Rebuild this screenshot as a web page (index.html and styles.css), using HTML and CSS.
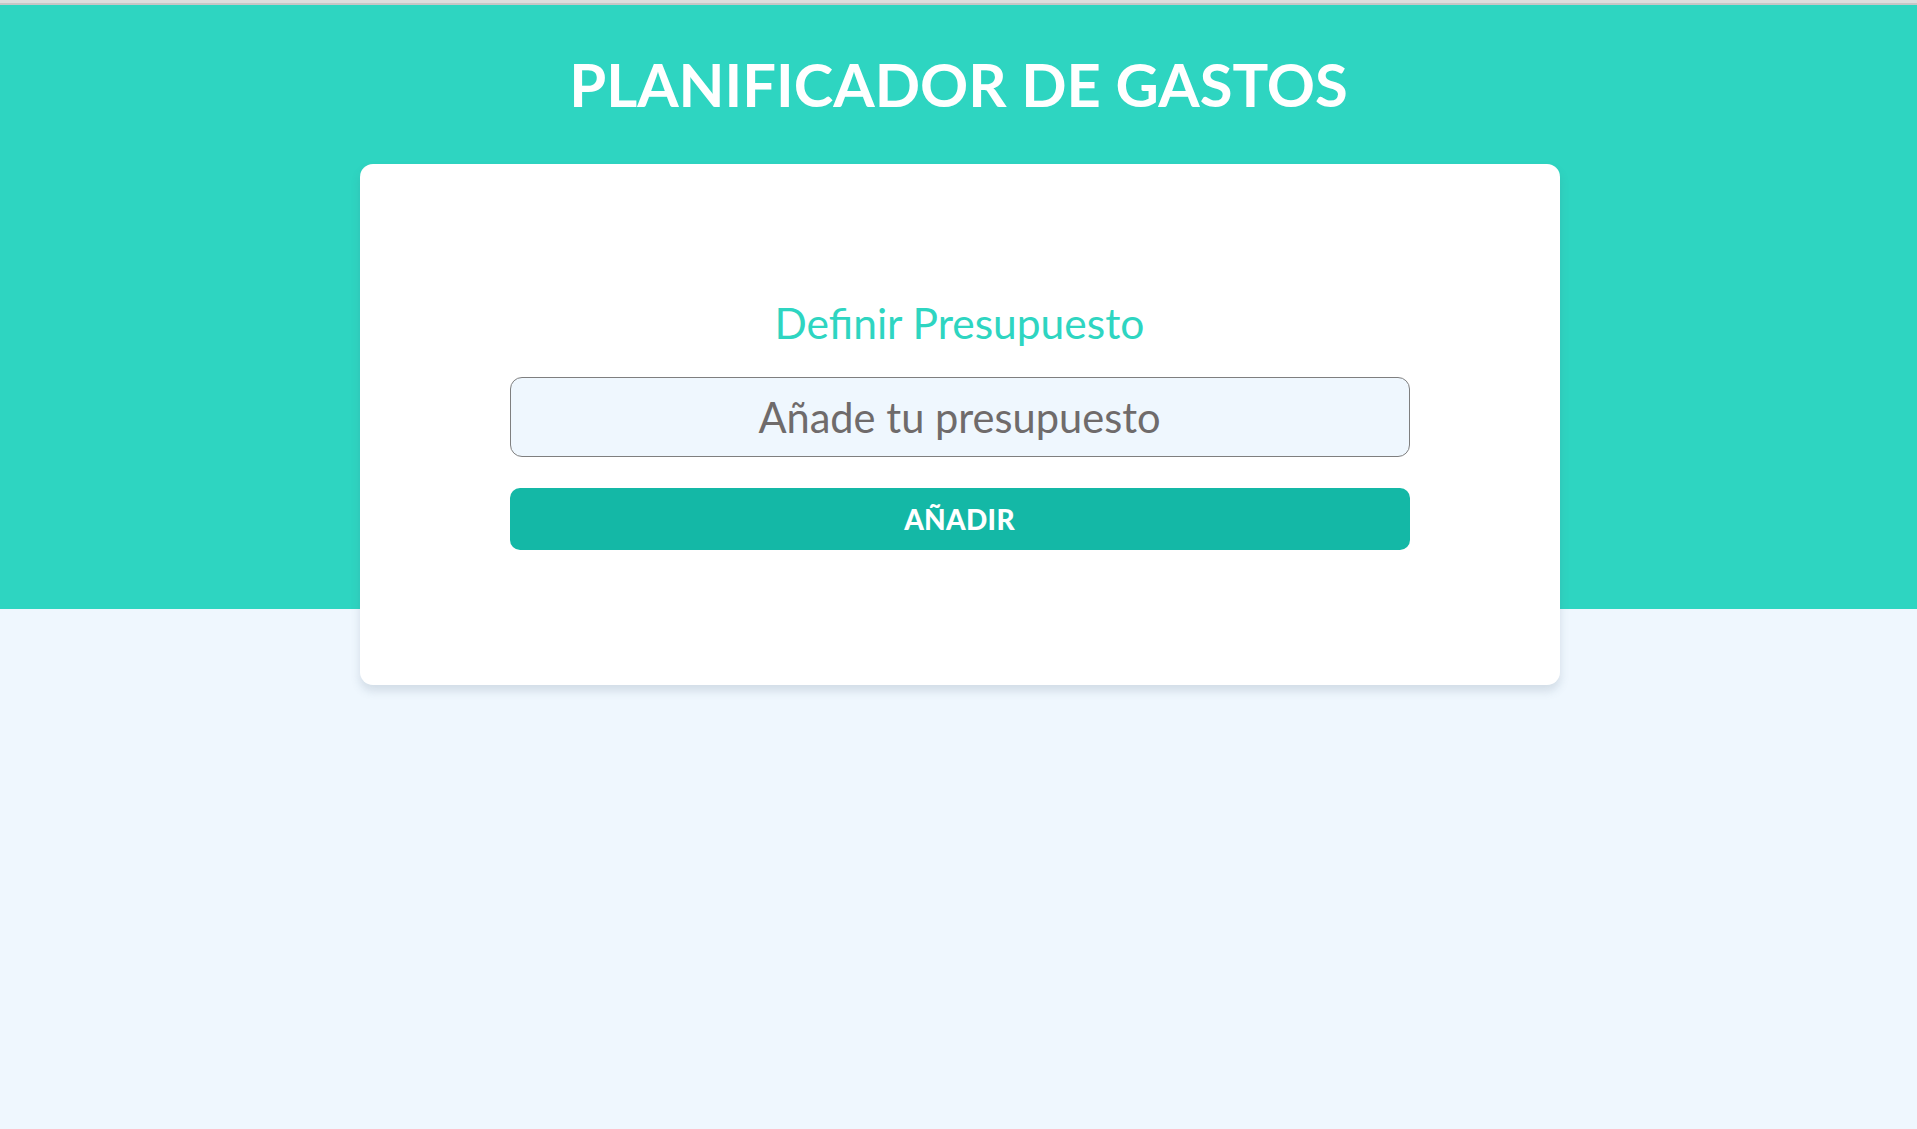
FILE: index.html
```html
<!DOCTYPE html>
<html lang="es">
<head>
<meta charset="utf-8">
<title>Planificador de Gastos</title>
<link rel="stylesheet" href="styles.css">
</head>
<body>
<div class="topline"></div>
<header class="header">
  <h1 class="title">PLANIFICADOR DE GASTOS</h1>
</header>
<main class="main">
  <section class="card">
    <form class="form">
      <label class="label" for="budget">Definir Presupuesto</label>
      <input class="input" id="budget" type="text" placeholder="Añade tu presupuesto">
      <button class="button" type="button">AÑADIR</button>
    </form>
  </section>
</main>
</body>
</html>
```
FILE: styles.css
```css
* { box-sizing: border-box; }
html, body { margin: 0; padding: 0; }
body {
  background: #eff7fe;
  font-family: Lato, "Open Sans", sans-serif;
  min-height: 1129px;
}
.topline {
  height: 5px;
  background: linear-gradient(#dddddd 0 3px, #c6c6c6 3px 5px);
}
.header {
  background: #2ed5c1;
  padding: 43px 0 489px;
}
.title {
  margin: 0;
  color: #ffffff;
  text-align: center;
  font-size: 59.7px;
  line-height: 72px;
  font-weight: 700;
}
.main {
  display: flex;
  justify-content: center;
  margin-top: -445px;
  padding-left: 2px;
}
.card {
  width: 1200px;
  background: #ffffff;
  border-radius: 13px;
  box-shadow: 0 6px 10px rgba(80, 100, 120, 0.18);
  padding: 134px 150px 135px;
}
.form {
  display: flex;
  flex-direction: column;
  align-items: center;
}
.label {
  color: #2ed5c1;
  font-size: 42.5px;
  line-height: 50px;
  font-weight: 400;
  margin-bottom: 29px;
}
.input {
  width: 100%;
  height: 80px;
  background: #eff7fe;
  border: 1px solid #7f7f7f;
  border-radius: 12px;
  text-align: center;
  font-family: Lato, "Open Sans", sans-serif;
  font-size: 41.6px;
  color: #555;
  outline: none;
  margin-bottom: 31px;
}
.input::placeholder { color: #6f6b6b; }
.button {
  width: 100%;
  height: 62px;
  border: none;
  border-radius: 10px;
  background: #14b8a6;
  color: #ffffff;
  font-family: Lato, "Open Sans", sans-serif;
  font-size: 28px;
  letter-spacing: 0.3px;
  font-weight: 900;
  cursor: pointer;
}
```
